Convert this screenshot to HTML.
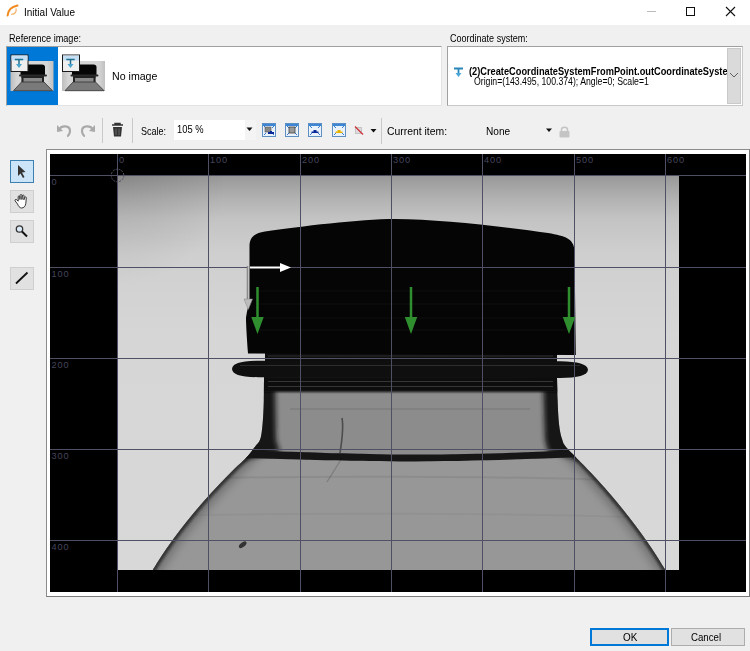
<!DOCTYPE html>
<html><head><meta charset="utf-8">
<style>
html,body{margin:0;padding:0;}
body{width:750px;height:651px;overflow:hidden;background:#f0f0f0;position:relative;font-family:"Liberation Sans",sans-serif;color:#000;}
.a{position:absolute;}
.t{position:absolute;white-space:nowrap;font-size:11px;line-height:12px;transform-origin:0 0;}
</style></head><body>
<!-- title bar -->
<div class="a" style="left:0;top:0;width:750px;height:25px;background:#fff;"></div>
<svg class="a" style="left:0;top:0" width="750" height="25">
  <path d="M7.6 15.5 C8 10.5 11.5 6.8 17.5 5.6" stroke="#f2891c" stroke-width="2" fill="none" stroke-linecap="round"/>
  <path d="M16.1 9 C16.6 12 14.8 14.2 11.6 14.3" stroke="#f6b36b" stroke-width="1.3" fill="none" stroke-linecap="round"/>
  <line x1="647" y1="11.5" x2="656" y2="11.5" stroke="#bdbdbd" stroke-width="1"/>
  <rect x="686.5" y="7.5" width="8" height="8" fill="none" stroke="#111" stroke-width="1"/>
  <path d="M726 7 L735 16 M735 7 L726 16" stroke="#111" stroke-width="1.1"/>
</svg>
<div class="t" style="left:24px;top:6px;font-size:11px;transform:scaleX(0.91)">Initial Value</div>

<!-- labels -->
<div class="t" style="left:9px;top:32px;font-size:11px;transform:scaleX(0.83)">Reference image:</div>
<div class="t" style="left:450px;top:32px;font-size:11px;transform:scaleX(0.82)">Coordinate system:</div>

<!-- reference strip -->
<div class="a" style="left:6px;top:46px;width:435px;height:59px;background:#fff;border-top:1px solid #a0a0a0;border-left:1px solid #a0a0a0;border-right:1px solid #e3e3e3;border-bottom:1px solid #e3e3e3;box-sizing:border-box;width:436px;height:60px;"></div>
<div class="a" style="left:7px;top:47px;width:51px;height:58px;background:#0078d7;"></div>
<svg class="a" style="left:0;top:40px" width="120" height="70" viewBox="0 40 120 70">
  <defs>
    <linearGradient id="tbg" x1="0" y1="0" x2="1" y2="0"><stop offset="0" stop-color="#bdbdbd"/><stop offset="0.15" stop-color="#d6d6d6"/><stop offset="0.85" stop-color="#d6d6d6"/><stop offset="1" stop-color="#c0c0c0"/></linearGradient>
  </defs>
  <g id="thumb">
    <rect x="10.5" y="61" width="43" height="30" fill="url(#tbg)"/>
    <path d="M20.5 66 Q21 64.5 24 64.5 L42 64.5 Q45 64.5 45 67 L45 75 L20.5 75 Z" fill="#060606"/>
    <rect x="19" y="74.5" width="28" height="2" rx="1" fill="#2a2a2a"/>
    <rect x="21.5" y="76" width="22.5" height="6" fill="#8a8a8a"/>
    <rect x="21.5" y="76" width="22.5" height="2" fill="#222"/>
    <rect x="21.5" y="76" width="2" height="6" fill="#222"/><rect x="42" y="76" width="2" height="6" fill="#222"/>
    <path d="M21.5 82 L44 82 L52.5 90.7 L13.5 90.7 Z" fill="#7a7a7a" stroke="#333" stroke-width="0.8"/>
    <rect x="11" y="55" width="17" height="16.5" fill="#efefef" stroke="#1a1a1a" stroke-width="1"/>
    <rect x="11.5" y="55.5" width="16" height="5" fill="#c5e0f5"/>
    <path d="M14.8 59.6 H23.2 M19 59.6 V65" stroke="#1f6f8f" stroke-width="1.5"/>
    <path d="M16 64 L22 64 L19 68 Z" fill="#4aa3cc"/>
  </g>
  <use href="#thumb" x="51.5" y="0"/>
</svg>
<div class="t" style="left:112px;top:70px;font-size:11px;transform:scaleX(0.965)">No image</div>

<!-- coordinate box -->
<div class="a" style="left:447px;top:46px;width:296px;height:60px;box-sizing:border-box;background:#fff;border-top:1px solid #a0a0a0;border-left:1px solid #a0a0a0;border-right:1px solid #c8c8c8;border-bottom:1px solid #c8c8c8;"></div>
<div class="a" style="left:727px;top:48px;width:14px;height:56px;box-sizing:border-box;background:#dadada;border:1px solid #c9c9c9;"></div>
<svg class="a" style="left:727px;top:70px" width="14" height="10"><path d="M3 3 L7 7 L11 3" stroke="#606060" stroke-width="1" fill="none"/></svg>
<svg class="a" style="left:450px;top:64px" width="16" height="16">
  <path d="M4 4.5 H13 M8.5 4.5 V10" stroke="#2a86b8" stroke-width="1.8"/>
  <path d="M5.5 9 L11.5 9 L8.5 13 Z" fill="#49a6d6"/>
</svg>
<div class="a" style="left:469px;top:66px;width:258px;height:12px;overflow:hidden;">
  <div class="t" style="left:0;top:0;font-size:10px;font-weight:bold;transform:scaleX(0.925)">(2)CreateCoordinateSystemFromPoint.outCoordinateSystem</div>
</div>
<div class="t" style="left:474px;top:76px;font-size:10px;transform:scaleX(0.87)">Origin=(143.495, 100.374); Angle=0; Scale=1</div>

<!-- toolbar -->
<svg class="a" style="left:50px;top:115px" width="340" height="32">
  <g fill="none" stroke="#a9a9a9" stroke-width="2.2">
    <path d="M9 15 C11 10 20 10 20 16 C20 19 18 21 17 21"/>
    <path d="M43 15 C41 10 32 10 32 16 C32 19 34 21 35 21"/>
  </g>
  <path d="M7 10 L7 17 L13 16 Z" fill="#a9a9a9"/>
  <path d="M45 10 L45 17 L39 16 Z" fill="#a9a9a9"/>
  <line x1="52.5" y1="3" x2="52.5" y2="28" stroke="#c9c9c9"/>
  <path d="M62 10 H73 M65 10 V8.5 H70 V10" stroke="#333" stroke-width="1.5" fill="none"/>
  <path d="M63 12 H72 L71 21.5 H64 Z" fill="#333"/>
  <path d="M66 13.5 V20 M69 13.5 V20" stroke="#777" stroke-width="0.8"/>
  <line x1="82.5" y1="3" x2="82.5" y2="28" stroke="#c9c9c9"/>
</svg>
<div class="t" style="left:141px;top:124.7px;font-size:11px;transform:scaleX(0.82)">Scale:</div>
<div class="a" style="left:174px;top:120px;width:82px;height:20px;background:#fff;"></div>
<div class="a" style="left:245px;top:120px;width:11px;height:20px;background:#f4f4f4;"></div>
<div class="t" style="left:177px;top:123px;font-size:11px;transform:scaleX(0.85)">105 %</div>
<svg class="a" style="left:246px;top:127px" width="8" height="5"><path d="M0.5 0.5 L6.5 0.5 L3.5 4 Z" fill="#111"/></svg>

<svg class="a" style="left:258px;top:118px" width="130" height="26">
  <defs>
    <g id="zb">
      <rect x="0.5" y="0.5" width="13" height="13" fill="#eaf3fb" stroke="#5e8fc3"/>
      <rect x="1" y="1" width="12" height="2" fill="#3d86d6"/>
      <path d="M2 3 L4 5 M12 3 L10 5 M2 12 L4 10 M12 12 L10 10" stroke="#3a7ad0" stroke-width="1"/>
    </g>
  </defs>
  <g transform="translate(4,5)"><use href="#zb"/><rect x="3" y="4" width="6" height="5" fill="#888" stroke="#555" stroke-width="0.6"/><path d="M6 9 H12 V11 H6 Z M8 8 H10 V9 H8Z" fill="#0a2a9a"/></g>
  <g transform="translate(27,5)"><use href="#zb"/><rect x="4" y="4" width="6" height="6" fill="#999" stroke="#444" stroke-width="0.8"/></g>
  <g transform="translate(50,5)"><use href="#zb"/><path d="M3.5 10 H10.5 V8.5 H3.5 Z M5.5 8.5 H8.5 V7 H5.5Z" fill="#0a2a9a"/></g>
  <g transform="translate(74,5)"><use href="#zb"/><path d="M3.5 10 H10.5 V8.5 H3.5 Z M5.5 8.5 H8.5 V7 H5.5Z" fill="#e8b400"/></g>
  <rect x="97.5" y="9.5" width="6" height="6" fill="#ddd" stroke="#bbb" stroke-width="0.8"/>
  <path d="M97 8.5 L105 16.5" stroke="#d0303a" stroke-width="1.2"/>
  <path d="M112.5 11 L118.5 11 L115.5 14.5 Z" fill="#111"/>
  <line x1="123.5" y1="0" x2="123.5" y2="26" stroke="#c9c9c9"/>
</svg>
<div class="t" style="left:387px;top:124.8px;font-size:11px;transform:scaleX(0.945)">Current item:</div>
<div class="t" style="left:486px;top:124.8px;font-size:11px;transform:scaleX(0.92)">None</div>
<svg class="a" style="left:544px;top:126px" width="30" height="12">
  <path d="M2 2.5 L8 2.5 L5 6 Z" fill="#111"/>
  <path d="M17.5 5 V3.5 C17.5 0.5 23.5 0.5 23.5 3.5 V5" stroke="#c4c4c4" stroke-width="1.5" fill="none"/>
  <rect x="15.5" y="5" width="10" height="6.5" rx="1" fill="#c4c4c4"/>
</svg>

<!-- left tools -->
<div class="a" style="left:10px;top:160px;width:24px;height:23px;box-sizing:border-box;background:#cce4f7;border:1px solid #3c7fb1;"></div>
<div class="a" style="left:10px;top:190px;width:24px;height:23px;box-sizing:border-box;background:#e1e1e1;border:1px solid #cfcfcf;"></div>
<div class="a" style="left:10px;top:220px;width:24px;height:23px;box-sizing:border-box;background:#e1e1e1;border:1px solid #cfcfcf;"></div>
<div class="a" style="left:10px;top:267px;width:24px;height:23px;box-sizing:border-box;background:#e1e1e1;border:1px solid #cfcfcf;"></div>
<svg class="a" style="left:0;top:150px" width="45" height="150" viewBox="0 150 45 150">
  <path d="M18 165 L18 176 L20.5 173.5 L23 178 L24.5 177 L22 172.5 L25.5 172 Z" fill="#333"/>
  <path d="M17.5 204 L15.2 201 C14.5 199.8 15.8 198.8 16.8 199.8 L18.2 201.2 L18.2 196.8 C18.2 195.6 19.9 195.6 19.9 196.8 L19.9 199.5 L20.1 195.4 C20.1 194.2 21.9 194.2 21.9 195.4 L21.9 199.5 L22.3 195.9 C22.4 194.7 24.1 194.8 24.1 196 L23.9 199.8 L24.6 197.6 C24.9 196.5 26.5 196.8 26.3 198 L25.8 203.5 C25.5 206.3 23.8 208 21.5 208 C19.6 208 18.4 206 17.5 204 Z" fill="#fff" stroke="#222" stroke-width="0.9" stroke-linejoin="round"/>
  <circle cx="19.5" cy="229" r="3.2" fill="#dbe8f5" stroke="#333" stroke-width="1.3"/>
  <path d="M22 231.5 L27 236.5" stroke="#111" stroke-width="2"/>
  <path d="M16 283.5 L27.5 272.5" stroke="#111" stroke-width="1.8"/>
</svg>

<!-- canvas frame -->
<div class="a" style="left:46px;top:149px;width:704px;height:448px;box-sizing:border-box;background:#fff;border:1px solid #8c8c8c;border-right-color:#7a7a7a;border-bottom-color:#7a7a7a;"></div>
<div class="a" style="left:50px;top:154px;width:696px;height:438px;background:#000;"></div>
<svg class="a" style="left:50px;top:154px" width="696" height="438" viewBox="50 154 696 438">
<defs>
 <linearGradient id="bgTop" gradientUnits="userSpaceOnUse" x1="0" y1="175" x2="0" y2="570">
  <stop offset="0" stop-color="#979797"/>
  <stop offset="0.06" stop-color="#b2b2b2"/>
  <stop offset="0.11" stop-color="#c3c3c3"/>
  <stop offset="0.2" stop-color="#cfcfcf"/>
  <stop offset="0.4" stop-color="#d6d6d6"/>
  <stop offset="1" stop-color="#d8d8d8"/>
 </linearGradient>
 <radialGradient id="vig" cx="117" cy="175" r="110" gradientUnits="userSpaceOnUse">
  <stop offset="0" stop-color="#000" stop-opacity="0.12"/>
  <stop offset="1" stop-color="#000" stop-opacity="0"/>
 </radialGradient>
 <clipPath id="silClip"><path d="M264 377 C264.0 380.9 264.0 392.9 263.8 400.7 C263.6 408.5 263.2 417.3 262.6 423.7 C262.0 430.1 261.6 435.2 260.3 439 C259.0 442.8 257.1 443.9 255 446.7 C252.9 449.5 251.5 452.1 247.9 456 C244.3 459.9 238.2 465.2 233.3 470 C228.4 474.8 223.4 480.0 218.7 485 C214.0 490.0 209.3 495.0 204.9 500 C200.5 505.0 196.2 510.0 192.1 515 C188.0 520.0 183.9 525.0 180.1 530 C176.3 535.0 172.6 540.0 169.1 545 C165.6 550.0 161.7 555.8 159 560 C156.3 564.2 153.8 568.3 152.8 570 L665.4 570 L665.4 570 C663.8 567.5 659.2 560.0 656 555 C652.8 550.0 649.4 545.0 645.9 540 C642.4 535.0 638.8 530.0 635 525 C631.2 520.0 627.3 515.0 623.3 510 C619.3 505.0 615.2 500.0 610.9 495 C606.6 490.0 602.2 485.0 597.6 480 C593.0 475.0 588.6 470.3 583.5 465 C578.4 459.7 570.4 452.3 566.8 448 C563.2 443.7 563.3 443.0 562 439 C560.7 435.0 559.7 430.5 559 424 C558.3 417.5 557.9 407.8 557.6 400 C557.3 392.2 557.1 380.8 557 377 Z"/></clipPath>
 <filter id="blur6" x="-50%" y="-50%" width="200%" height="200%"><feGaussianBlur stdDeviation="5"/></filter>
 <filter id="blur3" x="-50%" y="-50%" width="200%" height="200%"><feGaussianBlur stdDeviation="2.5"/></filter>
 <filter id="blur1" x="-50%" y="-50%" width="200%" height="200%"><feGaussianBlur stdDeviation="1"/></filter>
 <filter id="blur05" x="-50%" y="-50%" width="200%" height="200%"><feGaussianBlur stdDeviation="0.6"/></filter>
</defs>
<rect x="117" y="175" width="562" height="395" fill="url(#bgTop)"/>
<rect x="117" y="175" width="562" height="395" fill="url(#vig)"/>
<g clip-path="url(#silClip)">
 <rect x="140" y="370" width="540" height="210" fill="#8c8c8c"/>
 <rect x="140" y="455" width="540" height="120" fill="#979797"/>
 <path d="M255 446.7 C253.8 448.2 251.5 452.1 247.9 456 C244.3 459.9 238.2 465.2 233.3 470 C228.4 474.8 223.4 480.0 218.7 485 C214.0 490.0 209.3 495.0 204.9 500 C200.5 505.0 196.2 510.0 192.1 515 C188.0 520.0 183.9 525.0 180.1 530 C176.3 535.0 172.6 540.0 169.1 545 C165.6 550.0 161.7 555.8 159 560 C156.3 564.2 154.6 567.0 152.8 570 C151.0 573.0 148.8 576.7 148 578" fill="none" stroke="#000" stroke-opacity="0.25" stroke-width="16" filter="url(#blur6)"/>
 <path d="M566.8 448 C569.6 450.8 578.4 459.7 583.5 465 C588.6 470.3 593.0 475.0 597.6 480 C602.2 485.0 606.6 490.0 610.9 495 C615.2 500.0 619.3 505.0 623.3 510 C627.3 515.0 631.2 520.0 635 525 C638.8 530.0 642.4 535.0 645.9 540 C649.4 545.0 652.8 550.0 656 555 C659.2 560.0 663.1 566.2 665.4 570 C667.7 573.8 669.2 576.7 670 578" fill="none" stroke="#000" stroke-opacity="0.25" stroke-width="16" filter="url(#blur6)"/>
 <path d="M255 446.7 C253.8 448.2 251.5 452.1 247.9 456 C244.3 459.9 238.2 465.2 233.3 470 C228.4 474.8 223.4 480.0 218.7 485 C214.0 490.0 209.3 495.0 204.9 500 C200.5 505.0 196.2 510.0 192.1 515 C188.0 520.0 183.9 525.0 180.1 530 C176.3 535.0 172.6 540.0 169.1 545 C165.6 550.0 161.7 555.8 159 560 C156.3 564.2 154.6 567.0 152.8 570 C151.0 573.0 148.8 576.7 148 578" fill="none" stroke="#2e2e2e" stroke-opacity="0.9" stroke-width="6" filter="url(#blur1)"/>
 <path d="M566.8 448 C569.6 450.8 578.4 459.7 583.5 465 C588.6 470.3 593.0 475.0 597.6 480 C602.2 485.0 606.6 490.0 610.9 495 C615.2 500.0 619.3 505.0 623.3 510 C627.3 515.0 631.2 520.0 635 525 C638.8 530.0 642.4 535.0 645.9 540 C649.4 545.0 652.8 550.0 656 555 C659.2 560.0 663.1 566.2 665.4 570 C667.7 573.8 669.2 576.7 670 578" fill="none" stroke="#2e2e2e" stroke-opacity="0.9" stroke-width="6" filter="url(#blur1)"/>
 <path d="M255 377 L275 377 L276 440 L280 452 L240 460 L250 440 Z" fill="#151515" filter="url(#blur3)"/>
 <path d="M543 377 L565 377 L570 440 L580 460 L548 452 L545 440 Z" fill="#151515" filter="url(#blur3)"/>
 <rect x="255" y="376" width="310" height="16" fill="#111" filter="url(#blur1)"/>
 <path d="M268 381.5 H553 M268 386.5 H553" stroke="#5a5a5a" stroke-opacity="0.55" stroke-width="1.2"/>
 <path d="M290 409 H530" stroke="#000" stroke-opacity="0.15" stroke-width="1"/>
 <path d="M342 418 C344 428 342 440 340 453" stroke="#222" stroke-opacity="0.6" stroke-width="1.6" fill="none"/>
 <path d="M240 450 C300 452 340 453.5 400 454.5 C470 455 530 452 580 450 L580 457 C530 459 470 461.5 400 461.5 C340 461 300 459.5 240 458 Z" fill="#161616" filter="url(#blur05)"/>
 <path d="M225 478 C300 476 500 476 610 480" stroke="#000" stroke-opacity="0.07" stroke-width="2" fill="none"/>
 <path d="M342 458 C337 466 332 474 327 482" stroke="#000" stroke-opacity="0.18" stroke-width="1.2" fill="none"/>
 <path d="M195 515 C300 513 500 513 630 517" stroke="#000" stroke-opacity="0.035" stroke-width="2" fill="none"/>
 <ellipse cx="242.7" cy="544.8" rx="4.5" ry="2.2" transform="rotate(-38 242.7 544.8)" fill="#333"/>
</g>
<rect x="265" y="350" width="292" height="12" fill="#0e0e0e"/>
<path d="M268 356 H553" stroke="#444" stroke-opacity="0.6" stroke-width="1"/>
<path d="M232 369 C232.5 363.5 240 361.2 258 360.8 L560 361.2 C578 361.6 587.5 364 588 369.8 C587.5 375.5 578 377.8 560 378 L258 377.2 C240 377 232.5 374.5 232 369 Z" fill="#0f0f0f"/>
<path d="M240 365.5 H580" stroke="#3a3a3a" stroke-opacity="0.7" stroke-width="1"/>
<path d="M249.5 247 C249.5 238 253 233.5 265 231.5 C300 226.5 360 219 395 219 C440 219.5 500 226 548 233 C566 236 573.5 239 574.5 250 L575.8 355 L248 353.5 C247 340 246 325 246 318 C247 310 249 305 249.5 300 Z" fill="#050505"/>
<path d="M256 291 H568" stroke="#fff" stroke-opacity="0.02" stroke-width="2"/>
<path d="M256 304 H568" stroke="#fff" stroke-opacity="0.025" stroke-width="2"/>
<path d="M256 318 H568" stroke="#fff" stroke-opacity="0.02" stroke-width="2"/>
<path d="M256 330 H568" stroke="#fff" stroke-opacity="0.025" stroke-width="2"/>
<g stroke="#505064" stroke-width="1">
 <line x1="117.5" y1="154" x2="117.5" y2="592"/>
 <line x1="208.5" y1="154" x2="208.5" y2="592"/>
 <line x1="300.5" y1="154" x2="300.5" y2="592"/>
 <line x1="391.5" y1="154" x2="391.5" y2="592"/>
 <line x1="482.5" y1="154" x2="482.5" y2="592"/>
 <line x1="574.5" y1="154" x2="574.5" y2="592"/>
 <line x1="665.5" y1="154" x2="665.5" y2="592"/>
 <line x1="50" y1="175.5" x2="746" y2="175.5"/>
 <line x1="50" y1="267.5" x2="746" y2="267.5"/>
 <line x1="50" y1="358.5" x2="746" y2="358.5"/>
 <line x1="50" y1="449.5" x2="746" y2="449.5"/>
 <line x1="50" y1="540.5" x2="746" y2="540.5"/>
</g>
<circle cx="117.5" cy="175.5" r="6.3" fill="none" stroke="#505064" stroke-width="1" stroke-dasharray="2 1"/>
<g font-family="Liberation Sans" font-size="9.2" letter-spacing="0.9" fill="#45455c">
 <text x="119" y="163">0</text>
 <text x="210" y="163">100</text>
 <text x="302" y="163">200</text>
 <text x="393" y="163">300</text>
 <text x="484" y="163">400</text>
 <text x="576" y="163">500</text>
 <text x="667" y="163">600</text>
 <text x="51.5" y="184.7">0</text>
 <text x="51.5" y="276.7">100</text>
 <text x="51.5" y="367.7">200</text>
 <text x="51.5" y="458.7">300</text>
 <text x="51.5" y="549.7">400</text>
</g>
<path d="M247 267.5 H282" stroke="#fff" stroke-width="2"/>
<path d="M280 263 L291 267.5 L280 272 Z" fill="#fff"/>
<path d="M248.3 266 V300" stroke="#606060" stroke-width="3"/>
<path d="M248.3 266 V300" stroke="#c0c0c0" stroke-width="1.5"/>
<path d="M244 299 L252.5 299 L248.3 309.5 Z" fill="#bdbdbd" stroke="#808080" stroke-width="0.5"/>
<g fill="#2f8f2f">
 <rect x="256.25" y="287" width="2.5" height="31"/>
 <path d="M251.3 317 L263.7 317 L257.5 334 Z"/>
 <rect x="409.75" y="287" width="2.5" height="31"/>
 <path d="M404.8 317 L417.2 317 L411 334 Z"/>
 <rect x="567.75" y="287" width="2.5" height="31"/>
 <path d="M562.8 317 L575.2 317 L569 334 Z"/>
</g>
</svg>
<!-- OK / Cancel -->
<div class="a" style="left:590px;top:628px;width:79px;height:18px;box-sizing:border-box;background:#e1e1e1;border:2px solid #0078d7;"></div>
<div class="a" style="left:671px;top:628px;width:74px;height:18px;box-sizing:border-box;background:#e1e1e1;border:1px solid #adadad;"></div>
<div class="t" style="left:622.5px;top:631px;font-size:11px;transform:scaleX(0.9)">OK</div>
<div class="t" style="left:691px;top:631px;font-size:11px;transform:scaleX(0.88)">Cancel</div>
</body></html>
